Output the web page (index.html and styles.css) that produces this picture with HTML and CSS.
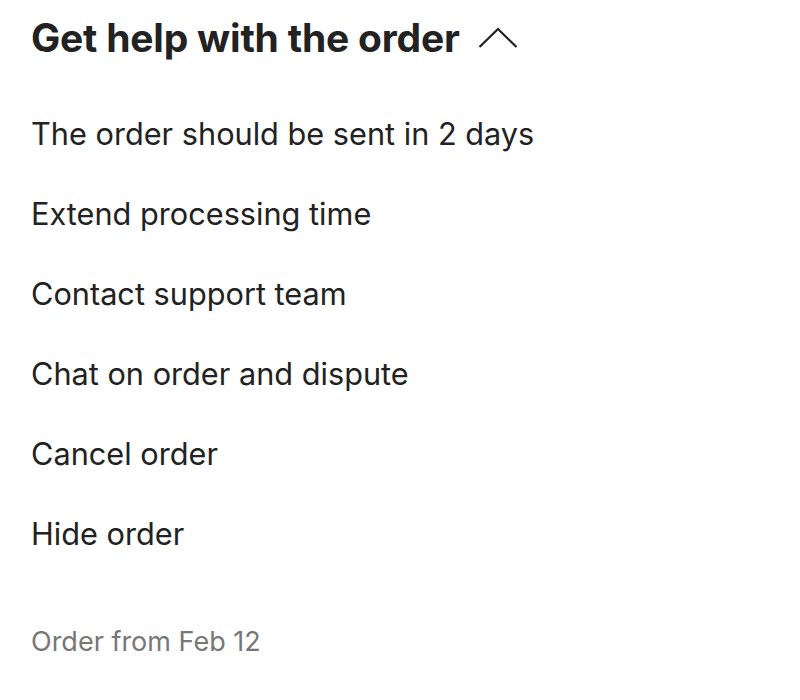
FILE: index.html
```html
<!DOCTYPE html>
<html>
<head>
<meta charset="utf-8">
<link rel="stylesheet" href="styles.css">
</head>
<body>
<div class="panel">
  <div class="header">
    <h1 class="title">Get help with the order</h1>
    <svg class="chevron" width="40" height="22" viewBox="0 0 40 22"><path d="M1.5 20 L20 2 L38.5 20" fill="none" stroke="#222" stroke-width="2.2"/></svg>
  </div>
  <ul class="items">
    <li>The order should be sent in 2 days</li>
    <li>Extend processing time</li>
    <li>Contact support team</li>
    <li>Chat on order and dispute</li>
    <li>Cancel order</li>
    <li>Hide order</li>
  </ul>
  <div class="footer">Order from Feb 12</div>
</div>
</body>
</html>
```
FILE: styles.css
```css
html, body { margin: 0; padding: 0; background: #fff; }
body { font-family: Inter, "Noto Sans", sans-serif; color: #222; }
.panel { padding: 14px 31px 0; }
.header { display: flex; align-items: center; gap: 18px; height: 48px; }
.title { margin: 0; font-size: 39px; font-weight: 700; letter-spacing: -0.2px; line-height: 48px; }
.chevron { display: block; margin-top: 0; }
.items { list-style: none; margin: 52px 0 0; padding: 0; }
.items li { font-size: 30.7px; height: 80px; line-height: 40px; }
.footer { margin-top: 31px; font-size: 27px; color: #777; }
```
